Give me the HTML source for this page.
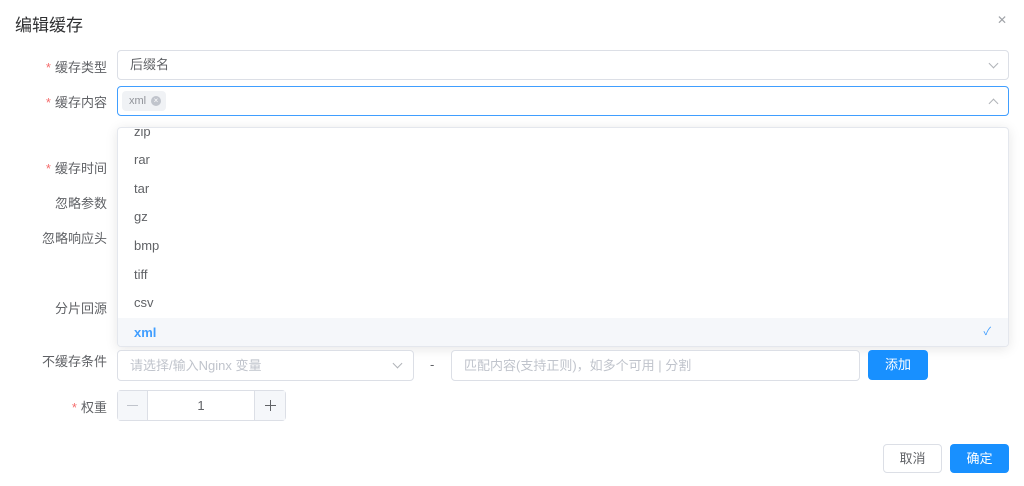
<!DOCTYPE html>
<html><head><meta charset="utf-8"><style>
*{box-sizing:border-box;margin:0;padding:0}
body{width:1024px;height:486px;background:#fff;font-family:"Liberation Sans","Noto Sans CJK SC",sans-serif;position:relative;overflow:hidden;color:#606266}
.abs{position:absolute}
.title{left:15px;top:11px;font-size:17px;color:#303133}
.close{right:17px;top:13px;font-size:12px;color:#a0a3a8}
.lbl{position:absolute;right:917px;font-size:13px;color:#606266;white-space:nowrap}
.lbl i{color:#f56c6c;font-style:normal;margin-right:4px}
.inp{position:absolute;border:1px solid #dcdfe6;border-radius:4px;background:#fff;font-size:13px;line-height:28px;padding:0 12px}
.arrow{position:absolute;width:7px;height:7px;border-right:1px solid #b0b3b8;border-bottom:1px solid #b0b3b8;transform:rotate(45deg)}
.dd{left:117px;top:127px;width:892px;height:220px;background:#fff;border:1px solid #e4e7ed;border-radius:4px;box-shadow:0 2px 12px rgba(0,0,0,.1);overflow:hidden}
.it{position:absolute;left:0;width:100%;height:29px;line-height:29px;padding-left:16px;font-size:13px;color:#606266}
.btn{position:absolute;border-radius:4px;font-size:13px;text-align:center}
</style></head><body>
<div class="abs title">编辑缓存</div>
<div class="abs close">✕</div>

<div class="lbl" style="top:57px"><i>*</i>缓存类型</div>
<div class="inp" style="left:117px;top:50px;width:892px;height:30px;color:#606266">后缀名</div>
<div class="arrow" style="left:990px;top:60px"></div>

<div class="lbl" style="top:92px"><i>*</i>缓存内容</div>
<div class="inp" style="left:117px;top:86px;width:892px;height:30px;border-color:#409eff"></div>
<div class="abs" style="left:122px;top:91px;width:44px;height:20px;background:#f0f2f5;border-radius:4px;font-size:11px;color:#909399;line-height:20px;padding-left:7px">xml<span style="position:absolute;left:29px;top:5px;width:10px;height:10px;border-radius:50%;background:#c0c4cc;color:#fff;font-size:8px;line-height:10px;text-align:center">×</span></div>
<div class="arrow" style="left:990px;top:100px;transform:rotate(225deg)"></div>

<div class="lbl" style="top:158px"><i>*</i>缓存时间</div>
<div class="lbl" style="top:193px">忽略参数</div>
<div class="lbl" style="top:228px">忽略响应头</div>
<div class="lbl" style="top:298px">分片回源</div>
<div class="lbl" style="top:351px">不缓存条件</div>
<div class="lbl" style="top:397px"><i>*</i>权重</div>

<div class="abs dd">
<div class="it" style="top:-11px">zip</div>
<div class="it" style="top:17px">rar</div>
<div class="it" style="top:46px">tar</div>
<div class="it" style="top:74px">gz</div>
<div class="it" style="top:103px">bmp</div>
<div class="it" style="top:132px">tiff</div>
<div class="it" style="top:160px">csv</div>
<div class="it" style="top:190px;background:#f5f7fa;color:#409eff;font-weight:bold">xml<span style="position:absolute;right:17px;font-size:11px;font-weight:normal">✓</span></div>
</div>

<div class="inp" style="left:117px;top:350px;width:297px;height:31px;color:#c0c4cc;line-height:29px">请选择/输入Nginx 变量</div>
<div class="arrow" style="left:394px;top:360px"></div>
<div class="abs" style="left:430px;top:357px;font-size:13px;color:#606266">-</div>
<div class="inp" style="left:451px;top:350px;width:409px;height:31px;color:#c0c4cc;line-height:29px">匹配内容(支持正则)，如多个可用 | 分割</div>
<div class="btn" style="left:868px;top:350px;width:60px;height:30px;background:#1890ff;color:#fff;line-height:30px">添加</div>

<div class="inp" style="left:117px;top:390px;width:169px;height:31px"></div>
<div class="abs" style="left:118px;top:391px;width:30px;height:29px;background:#f5f7fa;border-right:1px solid #dcdfe6;color:#c0c4cc"><div class="abs" style="left:9px;top:14px;width:11px;height:1px;background:#c0c4cc"></div></div>
<div class="abs" style="left:254px;top:391px;width:31px;height:29px;background:#f5f7fa;border-left:1px solid #dcdfe6"><div class="abs" style="left:10px;top:14px;width:11px;height:1px;background:#606266"></div><div class="abs" style="left:15px;top:9px;width:1px;height:11px;background:#606266"></div></div>
<div class="abs" style="left:148px;top:398px;width:106px;text-align:center;font-size:13px;color:#606266">1</div>

<div class="btn" style="left:883px;top:444px;width:59px;height:29px;border:1px solid #dcdfe6;color:#606266;line-height:27px">取消</div>
<div class="btn" style="left:950px;top:444px;width:59px;height:29px;background:#1890ff;color:#fff;line-height:29px">确定</div>
</body></html>
